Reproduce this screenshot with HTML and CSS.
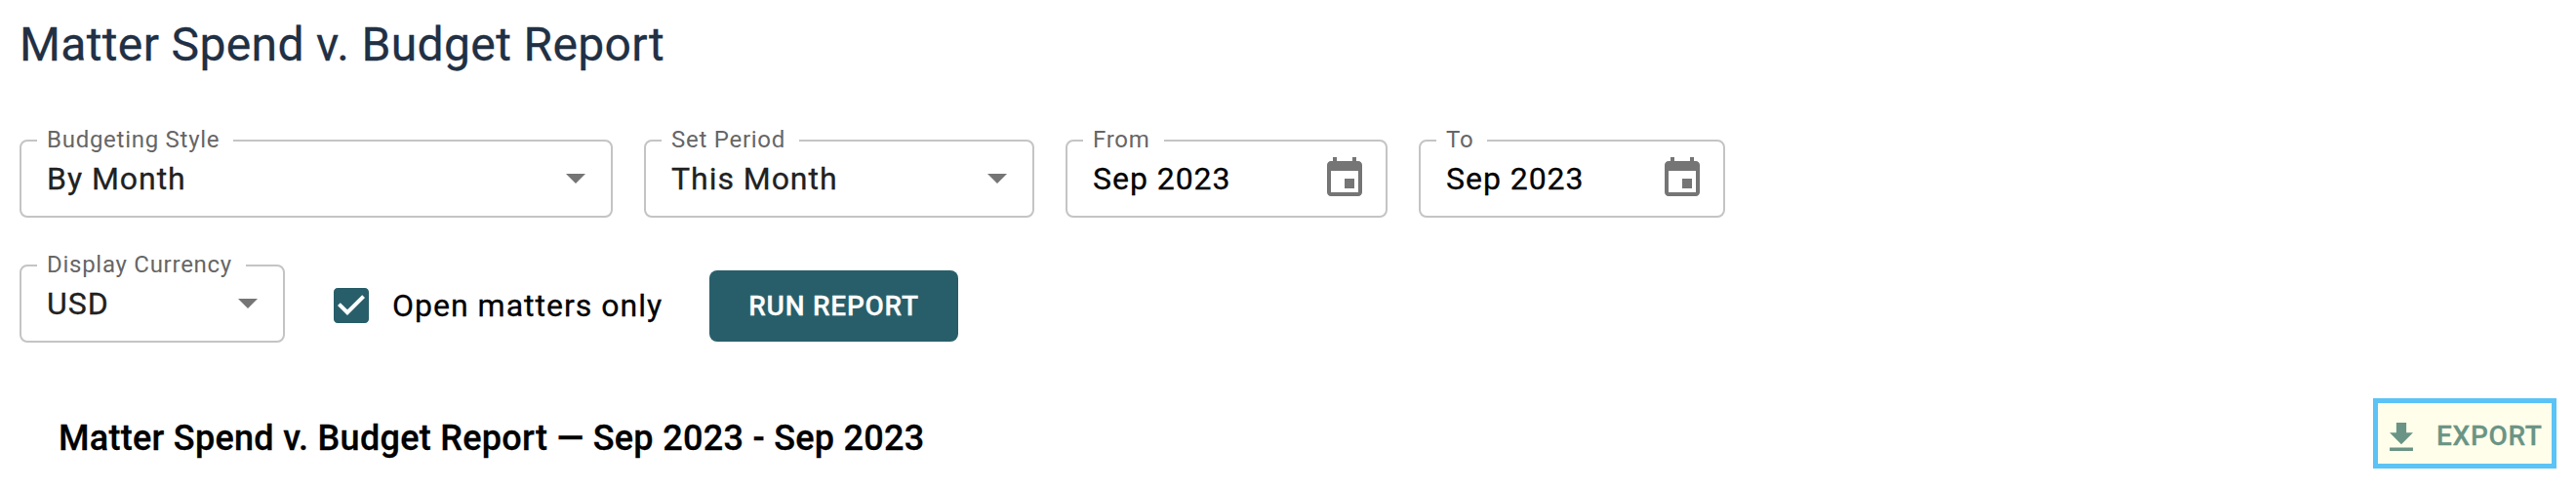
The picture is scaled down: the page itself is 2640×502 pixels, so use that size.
FILE: index.html
```html
<!DOCTYPE html>
<html lang="en">
<head>
<meta charset="utf-8">
<title>Matter Spend v. Budget Report</title>
<link rel="stylesheet" href="styles.css">
</head>
<body>
<main class="page">
  <h1 class="title">Matter Spend v. Budget Report</h1>
  <div class="row">
    <fieldset class="field style">
      <legend class="label">Budgeting Style</legend>
      <div class="control"><span class="value">By Month</span><svg class="arrow" viewBox="0 0 20 10"><path d="M0 0h20L10 10z"/></svg></div>
    </fieldset>
    <fieldset class="field period">
      <legend class="label">Set Period</legend>
      <div class="control"><span class="value">This Month</span><svg class="arrow" viewBox="0 0 20 10"><path d="M0 0h20L10 10z"/></svg></div>
    </fieldset>
    <fieldset class="field from">
      <legend class="label">From</legend>
      <div class="control"><span class="value date">Sep 2023</span><svg class="calendar" viewBox="0 0 24 24"><path d="M17 12h-5v5h5v-5zM16 1v2H8V1H6v2H5c-1.11 0-1.99.9-1.99 2L3 19c0 1.1.89 2 2 2h14c1.1 0 2-.9 2-2V5c0-1.1-.9-2-2-2h-1V1h-2zm3 18H5V8h14v11z"/></svg></div>
    </fieldset>
    <fieldset class="field to">
      <legend class="label">To</legend>
      <div class="control"><span class="value date">Sep 2023</span><svg class="calendar" viewBox="0 0 24 24"><path d="M17 12h-5v5h5v-5zM16 1v2H8V1H6v2H5c-1.11 0-1.99.9-1.99 2L3 19c0 1.1.89 2 2 2h14c1.1 0 2-.9 2-2V5c0-1.1-.9-2-2-2h-1V1h-2zm3 18H5V8h14v11z"/></svg></div>
    </fieldset>
  </div>
  <div class="row second">
    <fieldset class="field currency">
      <legend class="label">Display Currency</legend>
      <div class="control"><span class="value">USD</span><svg class="arrow" viewBox="0 0 20 10"><path d="M0 0h20L10 10z"/></svg></div>
    </fieldset>
    <div class="check">
      <svg class="box" viewBox="3 3 18 18"><path d="M19 3H5c-1.11 0-2 .9-2 2v14c0 1.1.89 2 2 2h14c1.11 0 2-.9 2-2V5c0-1.1-.89-2-2-2zm-9 14l-5-5 1.41-1.41L10 14.17l7.59-7.59L19 8l-9 9z"/></svg>
      <span class="check-text">Open matters only</span>
    </div>
    <button class="run">RUN REPORT</button>
  </div>
  <div class="report">
    <h2 class="report-title">Matter Spend v. Budget Report — Sep 2023 - Sep 2023</h2>
    <button class="export"><svg class="download" viewBox="5 3 14 17"><path d="M19 9h-4V3H9v6H5l7 7 7-7zM5 18v2h14v-2H5z"/></svg><span>EXPORT</span></button>
  </div>
</main>
</body>
</html>
```
FILE: styles.css
```css
* { box-sizing: border-box; }
body { margin: 0; background: #fff; font-family: Roboto, sans-serif; color: #000; -webkit-text-stroke: 0.3px currentColor; }
.page { padding: 0 20px; height: 502px; overflow: hidden; }
.title { margin: 0; padding-top: 18px; height: 132px; font-size: 48px; line-height: 56px; font-weight: 400; letter-spacing: 0.36px; color: #213044; }
.row { display: flex; align-items: flex-start; gap: 32px; }
.field { margin: 0; height: 91px; min-width: 0; border: 2px solid #c4c4c4; border-radius: 8px; padding: 0 0 0 16px; }
.style { width: 608px; }
.period { width: 400px; }
.from { width: 330px; }
.to { width: 314px; }
.currency { width: 272px; }
.label { padding: 0 14px 2px 10px; font-size: 24px; line-height: 22px; letter-spacing: 0.73px; color: #666; white-space: nowrap; -webkit-text-stroke-width: 0; }
.control { display: flex; align-items: center; justify-content: space-between; height: 54px; padding: 0 26px 0 10px; }
.value { font-size: 32px; line-height: 40px; letter-spacing: 0.96px; color: #212121; white-space: nowrap; }
.date { color: #000; }
.arrow { width: 20px; height: 10px; fill: #757575; }
.calendar { width: 48px; height: 48px; margin-right: -8px; fill: #757575; }
.second { margin-top: 37px; gap: 0; }
.check { display: flex; align-items: center; gap: 24px; margin: 31px 0 0 50px; height: 44px; width: 336px; }
.box { flex: none; width: 36px; height: 36px; fill: #285e69; }
.check-text { font-size: 32px; letter-spacing: 1px; white-space: nowrap; }
.run { margin: 17px 0 0 49px; width: 255px; height: 73px; padding: 0; border: 0; border-radius: 8px; background: #285e69; color: #fff; font: 500 28px/73px Roboto, sans-serif; letter-spacing: 0.75px; -webkit-text-stroke: 0.3px currentColor; }
.report { display: flex; justify-content: space-between; margin-top: 57px; padding-left: 40px; }
.report-title { margin: 0; font-size: 36px; line-height: 82px; font-weight: 500; letter-spacing: 0.29px; }
.export { display: flex; align-items: center; width: 188px; height: 72px; padding: 6px 0 0 12px; border: 5px solid #5bc3f5; background: #fffeea; color: #6a9485; font: 500 28px/40px Roboto, sans-serif; letter-spacing: 0.7px; gap: 24px; -webkit-text-stroke: 0.3px currentColor; }
.download { width: 24px; height: 29px; fill: #6a9485; }
```
